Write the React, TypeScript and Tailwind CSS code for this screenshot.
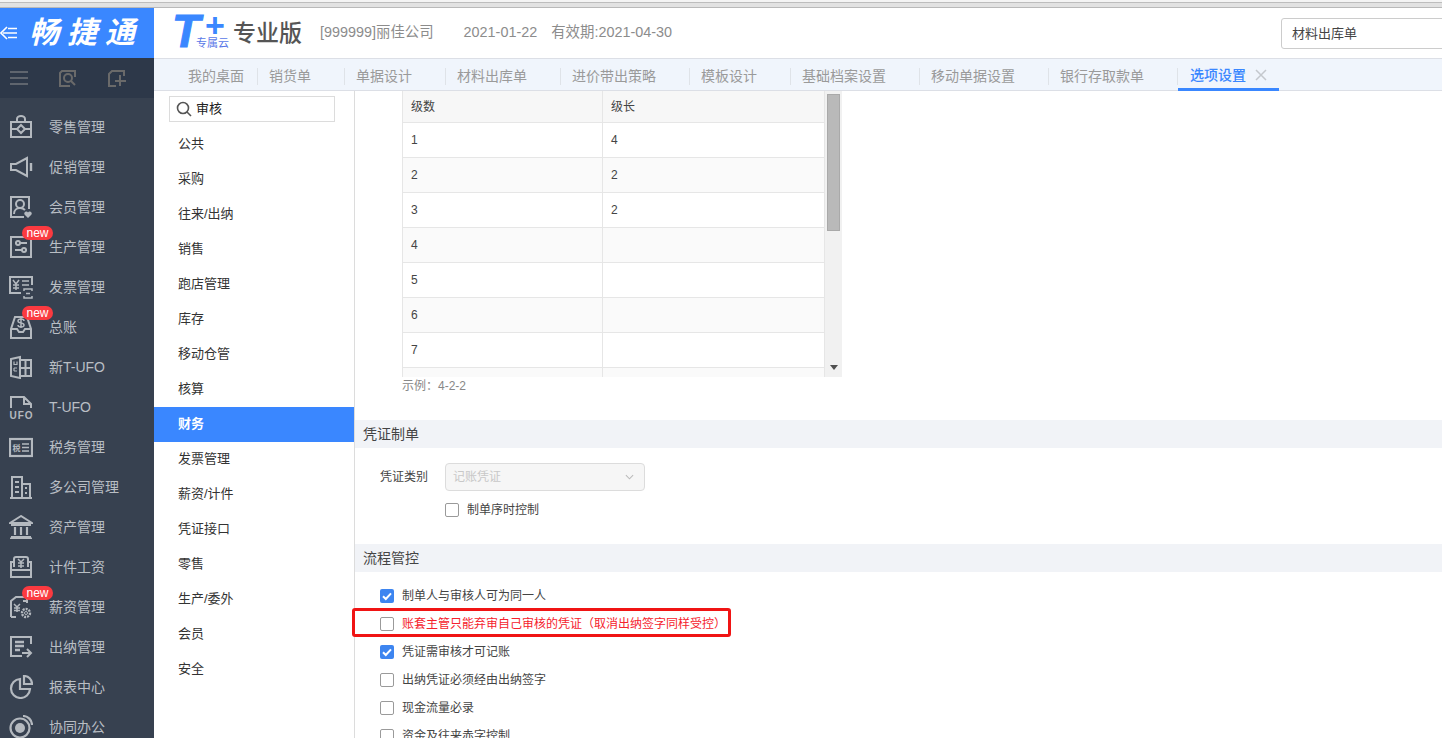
import React from 'react';

const font = { fontFamily: '"Liberation Sans", "Noto Sans CJK SC", sans-serif' };

const Svg = ({ children }: { children: React.ReactNode }) => (
  <svg viewBox="0 0 24 24" className="w-6 h-6" fill="none" stroke="#b4b9bf" strokeWidth="2">
    {children}
  </svg>
);

const icons: Record<string, React.ReactNode> = {
  retail: (
    <Svg>
      <path d="M2 7h20v15H2zM8 7V4a4 3 0 0 1 8 0v3" />
      <path d="M12 10l4 4-4 4-4-4z" />
      <path d="M2 14h6M16 14h6" />
    </Svg>
  ),
  promo: (
    <Svg>
      <path d="M2 9h5l11-6v18L7 15H2z" />
      <path d="M22 8v8" strokeWidth="2.400" />
    </Svg>
  ),
  member: (
    <Svg>
      <path d="M20 14V2H2v20h13" />
      <circle cx="11" cy="9" r="4" />
      <path d="M5 19c0-4 3-6 6-6s4 1 5 2" />
      <path d="M19 23l-3.500-3.500a2 2 0 0 1 3.500-2 2 2 0 0 1 3.500 2z" fill="#b4b9bf" stroke="none" />
    </Svg>
  ),
  production: (
    <Svg>
      <rect x="2" y="2" width="20" height="20" />
      <path d="M6 8h12M6 15h12" />
      <circle cx="9" cy="8" r="2" fill="#374150" />
      <circle cx="15" cy="15" r="2" fill="#374150" />
    </Svg>
  ),
  invoice: (
    <Svg>
      <path d="M12 18H1V2h22v8" />
      <path d="M4 5l3 4 3-4M7 9v6M4 10h6M4 13h6M13 6h7M13 10h7" strokeWidth="1.500" />
      <path d="M15 16v-2h8v2M15 21v2h8v-2M17 18.500h4" strokeWidth="1.500" />
    </Svg>
  ),
  ledger: (
    <Svg>
      <path d="M6 2h12l4 12v9H2v-9z" />
      <path d="M2 14h6l2 3h4l2-3h6" />
      <path d="M15 6a3 2 0 0 0-6 0c0 3 6 1 6 4a3 2 0 0 1-6 0M12 3v10" strokeWidth="1.500" />
    </Svg>
  ),
  ufoNew: (
    <Svg>
      <path d="M2 4l9-2v21l-9-2zM11 5h11v16H11zM16.500 5v16M11 13h11" />
      <path d="M5 6.500v3h3v-3M5 13h3M5 16h3M5 13v3" strokeWidth="1.200" />
    </Svg>
  ),
  ufo: (
    <Svg>
      <path d="M2 13V2h13l7 7v4M15 2v7h7" />
      <text x="0.500" y="23.500" fontSize="10" fontWeight="700" fill="#b4b9bf" stroke="none" letterSpacing="1" fontFamily="Liberation Sans">
        UFO
      </text>
    </Svg>
  ),
  tax: (
    <Svg>
      <rect x="1" y="4" width="22" height="17" strokeWidth="2.200" />
      <text x="3.500" y="16" fontSize="8" fontWeight="700" fill="#b4b9bf" stroke="none" fontFamily="Noto Sans CJK SC">
        税
      </text>
      <path d="M13 9h7M13 12.500h7M13 16h7" strokeWidth="1.500" />
    </Svg>
  ),
  company: (
    <Svg>
      <path d="M1 23h22M3 23V2h10v21M13 9h8v14" />
      <path d="M6 7h4M6 12h4M6 17h4M16 13h2M16 18h2" />
    </Svg>
  ),
  asset: (
    <Svg>
      <path d="M12 1L1 8h22z" />
      <path d="M2 10h20M2 22h20" strokeWidth="2" />
      <path d="M6 12v8M12 12v8M18 12v8M1 23.500h22" strokeWidth="2.200" />
    </Svg>
  ),
  piece: (
    <Svg>
      <path d="M5 12V4a2 2 0 0 1 2-2h10a2 2 0 0 1 2 2v8" />
      <path d="M5 7H2v15h20V7h-3M2 15h20" />
      <path d="M9 4l3 3 3-3M12 7v6M9 8h6M9 11h6" strokeWidth="1.500" />
    </Svg>
  ),
  salary: (
    <Svg>
      <path d="M2 22V6l5-4h11v6M2 22h5" />
      <path d="M5 9l3 3 3-3M8 12v5M5 13h6M5 15.500h6" strokeWidth="1.500" />
      <path d="M14 6h3" />
      <circle cx="17" cy="18" r="4" strokeWidth="2.400" strokeDasharray="2 1" />
      <circle cx="17" cy="18" r="1.500" strokeWidth="1" />
    </Svg>
  ),
  cashier: (
    <Svg>
      <path d="M22 9V2H2v19h11" />
      <path d="M6 7h9M6 11h9M6 15h5" strokeWidth="2.400" />
      <path d="M13 18h9M18 14l4 4-4 4" />
    </Svg>
  ),
  report: (
    <Svg>
      <path d="M11 4a9.500 9.500 0 1 0 10 10H11z" strokeWidth="2.200" />
      <path d="M15 1a8 8 0 0 1 8 8h-8z" strokeWidth="2.200" />
    </Svg>
  ),
  office: (
    <Svg>
      <circle cx="11" cy="13" r="9.500" strokeWidth="2.200" />
      <circle cx="11" cy="13" r="5" fill="#b4b9bf" stroke="none" />
      <path d="M14 1a9 9 0 0 1 9 9" strokeWidth="2.200" />
    </Svg>
  ),
};

const navItems = [
  { label: '零售管理', icon: 'retail' },
  { label: '促销管理', icon: 'promo' },
  { label: '会员管理', icon: 'member' },
  { label: '生产管理', icon: 'production', isNew: true },
  { label: '发票管理', icon: 'invoice' },
  { label: '总账', icon: 'ledger', isNew: true },
  { label: '新T-UFO', icon: 'ufoNew' },
  { label: 'T-UFO', icon: 'ufo' },
  { label: '税务管理', icon: 'tax' },
  { label: '多公司管理', icon: 'company' },
  { label: '资产管理', icon: 'asset' },
  { label: '计件工资', icon: 'piece' },
  { label: '薪资管理', icon: 'salary', isNew: true },
  { label: '出纳管理', icon: 'cashier' },
  { label: '报表中心', icon: 'report' },
  { label: '协同办公', icon: 'office' },
];

const tabs = ['销货单', '单据设计', '材料出库单', '进价带出策略', '模板设计', '基础档案设置', '移动单据设置', '银行存取款单'];

const menu = ['公共', '采购', '往来/出纳', '销售', '跑店管理', '库存', '移动仓管', '核算', '财务', '发票管理', '薪资/计件', '凭证接口', '零售', '生产/委外', '会员', '安全'];

const levels = [
  ['1', '4'],
  ['2', '2'],
  ['3', '2'],
  ['4', ''],
  ['5', ''],
  ['6', ''],
  ['7', ''],
  ['', ''],
];

const flowOptions = [
  { label: '制单人与审核人可为同一人', checked: true },
  { label: '账套主管只能弃审自己审核的凭证（取消出纳签字同样受控）', red: true },
  { label: '凭证需审核才可记账', checked: true },
  { label: '出纳凭证必须经由出纳签字' },
  { label: '现金流量必录' },
  { label: '资金及往来赤字控制' },
];

const CheckBox = ({ checked }: { checked?: boolean }) =>
  checked ? (
    <span className="w-[14px] h-[14px] shrink-0 rounded-[2px] bg-[#3d85f0] flex items-center justify-center">
      <svg viewBox="0 0 14 14" className="w-[14px] h-[14px]" fill="none" stroke="#fff" strokeWidth="2">
        <path d="M3 7.200l2.800 2.800L11 4.300" />
      </svg>
    </span>
  ) : (
    <span className="w-[14px] h-[14px] shrink-0 rounded-[2px] border border-[#9a9a9a] bg-white" />
  );

const SectionBar = ({ title }: { title: string }) => (
  <div className="h-7 bg-[#f1f3f7] pl-2 flex items-center text-sm text-[#444]">{title}</div>
);

export default function App() {
  return (
    <div className="h-screen w-full overflow-hidden flex flex-col bg-white" style={font}>
      {/* browser edge */}
      <div className="h-2 shrink-0 bg-[#e2e2e2] border-b border-[#b9b9b9]">
        <div className="h-[3px] bg-[#f4f4f4] border-b border-[#bdbdbd]" />
      </div>

      {/* Header */}
      <header className="h-[50px] shrink-0 flex items-center">
        <div className="w-[154px] h-full bg-[#3a87ff] flex items-center shrink-0">
          <svg viewBox="0 0 18 16" className="w-[18px] h-4" fill="none" stroke="#fff" strokeWidth="1.600">
            <path d="M7 2L1 8l6 6M8 3.500h9M3 8h14M8 12.500h9" />
          </svg>
          <span className="ml-[11px] text-[30px] leading-none font-bold italic text-white tracking-[8px] whitespace-nowrap">畅捷通</span>
        </div>
        <div className="relative w-[56px] h-[34px] ml-5 shrink-0">
          <span className="absolute -left-[2px] -top-[8px] text-[46px] leading-none font-bold italic text-[#3a87ff] [-webkit-text-stroke:1px_#3a87ff]">T</span>
          <span className="absolute left-[31px] -top-[8px] text-[34px] leading-none font-bold text-[#3a87ff]">+</span>
          <span className="absolute left-[22px] top-[22px] text-[11px] leading-none text-[#5a78e8] whitespace-nowrap">专属云</span>
        </div>
        <span className="ml-[3px] text-[23px] font-medium text-[#555] whitespace-nowrap">专业版</span>
        <span className="ml-[18px] text-[14.4px] text-[#8c8c8c] whitespace-nowrap">[999999]丽佳公司</span>
        <span className="ml-[30px] text-[14.4px] text-[#8c8c8c]">2021-01-22</span>
        <span className="ml-[14px] text-[14.4px] text-[#8c8c8c] whitespace-nowrap">有效期:2021-04-30</span>
        <div className="ml-auto w-[175px] -mr-[14px] h-[31px] mt-[1px] border border-[#ccc] rounded-[3px] pl-[10px] flex items-center text-[13px] text-[#444] shrink-0">
          材料出库单
        </div>
      </header>

      <div className="flex flex-1 min-h-0">
        {/* Sidebar */}
        <aside className="w-[154px] shrink-0 bg-[#374150] flex flex-col overflow-hidden">
          <div className="h-10 shrink-0 bg-[#2d3849] flex items-center pl-[10px] gap-[31px] text-[#5f656e]">
            <svg viewBox="0 0 18 16" className="w-[18px] h-4" fill="none" stroke="#5f656e" strokeWidth="2">
              <path d="M0 2h18M0 8h18M0 14h18" />
            </svg>
            <svg viewBox="0 0 18 18" className="w-[18px] h-[18px]" fill="none" stroke="#6a6a6a" strokeWidth="2">
              <path d="M16 8V2H3L1 4v13h10" />
              <circle cx="9" cy="9" r="4" />
              <path d="M12 12l4 4" />
            </svg>
            <svg viewBox="0 0 18 18" className="w-[18px] h-[18px]" fill="none" stroke="#6a6a6a" strokeWidth="2">
              <path d="M16 7V2H4L1 5v12h7" />
              <path d="M12 6v11M7 12h11" />
            </svg>
          </div>
          <nav className="pt-[9px]">
            {navItems.map((item) => (
              <div key={item.label} className="relative h-10 flex items-center pl-[9px] text-sm text-[#b9bec4]">
                <span className="w-6 h-6 shrink-0">{icons[item.icon]}</span>
                <span className="ml-4 whitespace-nowrap">{item.label}</span>
                {item.isNew && (
                  <span className="absolute left-[22px] top-[-1px] w-[31px] h-[14px] rounded-full bg-[#fb3a40] text-white text-xs leading-[14px] text-center">
                    new
                  </span>
                )}
              </div>
            ))}
          </nav>
        </aside>

        <div className="flex-1 min-w-0 flex flex-col">
          {/* Tabs */}
          <div className="h-[33px] shrink-0 bg-[#f0f5fc] border-y border-[#dcdfe6] flex items-start text-sm text-[#9a9a9a] whitespace-nowrap pl-[34px]">
            <span className="mt-[9px] h-[17px] leading-[17px] border-r border-[#dfe3e8] pr-[13px]">我的桌面</span>
            {tabs.map((tab) => (
              <span key={tab} className="mt-[9px] h-[17px] leading-[17px] pl-[11px] pr-[33px] border-r border-[#dfe3e8]">
                {tab}
              </span>
            ))}
            <div className="h-[32px] w-[101px] border-b-[3px] border-[#3a87ff] pl-[12px] pt-[2px] flex items-center gap-[9px] -mb-px">
              <span className="text-[#3a87ff] font-medium">选项设置</span>
              <svg viewBox="0 0 12 12" className="w-3 h-3" fill="none" stroke="#c4c8cd" strokeWidth="1.500">
                <path d="M1 1l10 10M11 1L1 11" />
              </svg>
            </div>
          </div>

          <div className="flex flex-1 min-h-0">
            {/* Option menu */}
            <div className="w-[201px] shrink-0 border-r border-[#dcdcdc] pt-[5px]">
              <div className="ml-[15px] w-[166px] h-[26px] border border-[#dcdcdc] flex items-center pl-[6px] gap-1 text-[13px] text-[#222]">
                <svg viewBox="0 0 16 16" className="w-4 h-4" fill="none" stroke="#555" strokeWidth="1.600">
                  <circle cx="7" cy="7" r="5.500" />
                  <path d="M11 11l4 4" />
                </svg>
                审核
              </div>
              <div className="mt-[5px] text-[13px] text-[#333]">
                {menu.map((m) => (
                  <div key={m} className={`h-[35px] pl-6 pb-0.5 flex items-center ${m === '财务' ? 'bg-[#3a87ff] text-white font-bold' : ''}`}>
                    {m}
                  </div>
                ))}
              </div>
            </div>

            {/* Options content */}
            <div className="flex-1 min-w-0 text-xs text-[#444]">
              <div className="pl-[47px]">
                <div className="w-[440px] h-[286px] overflow-hidden flex">
                  <div className="w-[423px] shrink-0">
                    <div className="grid grid-cols-[200px_1fr] h-8 bg-[#f7f7f7] border-b border-l border-[#e6e6e6]">
                      <div className="pl-2 flex items-center border-r border-[#e6e6e6]">级数</div>
                      <div className="pl-2 flex items-center border-r border-[#e6e6e6]">级长</div>
                    </div>
                    {levels.map(([level, len], i) => (
                      <div key={i} className={`grid grid-cols-[200px_1fr] h-[35px] border-b border-l border-[#e6e6e6] ${i % 2 === 1 ? 'bg-[#fafafa]' : 'bg-white'}`}>
                        <div className="pl-2 flex items-center border-r border-[#e6e6e6]">{level}</div>
                        <div className="pl-2 flex items-center border-r border-[#e6e6e6]">{len}</div>
                      </div>
                    ))}
                  </div>
                  <div className="flex-1 bg-[#f1f1f1] flex flex-col items-center pt-[3px]">
                    <div className="w-[13px] h-[137px] bg-[#b9b9b9] border border-[#a9a9a9]" />
                    <div className="mt-auto mb-[7px] w-0 h-0 border-x-[4px] border-x-transparent border-t-[5px] border-t-[#505050]" />
                  </div>
                </div>
                <div className="h-[16px] mt-[1px] leading-[16px] text-[#888]">示例：4-2-2</div>
              </div>

              <div className="mt-[26px]">
                <SectionBar title="凭证制单" />
                <div className="mt-[15px] flex items-center h-7 pl-[25px]">
                  <span className="w-[65px]">凭证类别</span>
                  <div className="w-[200px] h-7 rounded-[4px] border border-[#dcdcdc] bg-[#f6f6f6] pl-[7px] pr-[10px] flex items-center justify-between text-[#c8c8c8]">
                    记账凭证
                    <svg viewBox="0 0 10 6" className="w-[9px] h-[6px]" fill="none" stroke="#bbb" strokeWidth="1.200">
                      <path d="M1 1l4 4 4-4" />
                    </svg>
                  </div>
                </div>
                <div className="mt-3 pl-[90px] flex items-center gap-2 h-[14px]">
                  <CheckBox />
                  制单序时控制
                </div>
              </div>

              <div className="mt-[27px]">
                <SectionBar title="流程管控" />
                <div className="mt-[10px] pl-[25px]">
                  {flowOptions.map((opt) => (
                    <div key={opt.label} className={`relative h-7 flex items-center gap-2 whitespace-nowrap ${opt.red ? 'text-[#f5222d]' : ''}`}>
                      <CheckBox checked={opt.checked} />
                      {opt.label}
                      {opt.red && <span className="absolute left-[-28px] top-[-2px] w-[379px] h-[29px] border-[3px] border-[#f01414] rounded-[3px]" />}
                    </div>
                  ))}
                </div>
              </div>
            </div>
          </div>
        </div>
      </div>
    </div>
  );
}
